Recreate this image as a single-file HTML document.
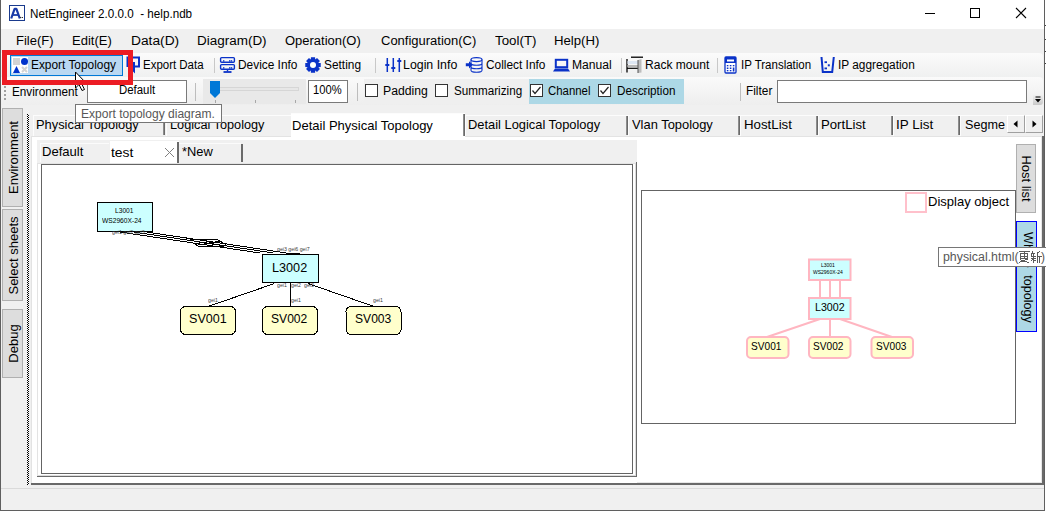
<!DOCTYPE html>
<html><head><meta charset="utf-8">
<style>
*{margin:0;padding:0;box-sizing:border-box;}
html,body{width:1046px;height:512px;overflow:hidden;background:#fff;}
body{position:relative;font-family:"Liberation Sans",sans-serif;color:#000;}
.a{position:absolute;}
.t{position:absolute;white-space:pre;line-height:1;}
</style></head><body>
<div class="a" style="left:0px;top:0px;width:1046px;height:512px;background:#fff"></div>
<div class="a" style="left:1px;top:29px;width:1043px;height:481px;background:#f0f0f0"></div>
<div class="a" style="left:0px;top:0px;width:1px;height:511px;background:#5f5f5f"></div>
<div class="a" style="left:1044px;top:0px;width:1px;height:511px;background:#5f5f5f"></div>
<div class="a" style="left:0px;top:510px;width:1045px;height:1px;background:#5f5f5f"></div>
<div class="a" style="left:1045px;top:25px;width:1px;height:1px;background:#444"></div>
<div class="a" style="left:1045px;top:39px;width:1px;height:1px;background:#444"></div>
<div class="a" style="left:1045px;top:51px;width:1px;height:1px;background:#444"></div>
<div class="a" style="left:1045px;top:63px;width:1px;height:1px;background:#444"></div>
<div class="a" style="left:9px;top:5px;width:16px;height:16px;border:1px solid #1a3a8c;background:#fff"></div>
<svg class="a" style="left:9px;top:5px;" width="16" height="16" viewBox="0 0 16 16"><path d="M2.2 13.5L5.6 3.8H7.4L10.8 13.5" fill="none" stroke="#1a3aa8" stroke-width="2.2" stroke-linejoin="bevel"/><path d="M3.5 10H9.5" stroke="#1a3aa8" stroke-width="1.8"/><path d="M11 12.5H14" stroke="#333" stroke-width="1.2" stroke-dasharray="1.3 .6"/></svg>
<div class="t" style="left:30.00px;top:8px;font-size:12.5px;color:#000;transform:scaleX(0.9331);transform-origin:0 0;">NetEngineer 2.0.0.0  - help.ndb</div>
<div class="a" style="left:925px;top:13px;width:10px;height:1px;background:#000"></div>
<div class="a" style="left:970px;top:8px;width:10px;height:10px;border:1px solid #000"></div>
<svg class="a" style="left:1015px;top:7px;" width="12" height="12" viewBox="0 0 12 12"><path d="M1 1L11 11M11 1L1 11" stroke="#000" stroke-width="1.1"/></svg>
<div class="t" style="left:16.40px;top:35px;font-size:12.5px;color:#000;transform:scaleX(1.0414);transform-origin:0 0;">File(F)</div>
<div class="t" style="left:72.20px;top:35px;font-size:12.5px;color:#000;transform:scaleX(1.0409);transform-origin:0 0;">Edit(E)</div>
<div class="t" style="left:130.60px;top:35px;font-size:12.5px;color:#000;transform:scaleX(1.1003);transform-origin:0 0;">Data(D)</div>
<div class="t" style="left:196.60px;top:35px;font-size:12.5px;color:#000;transform:scaleX(1.0776);transform-origin:0 0;">Diagram(D)</div>
<div class="t" style="left:285.00px;top:35px;font-size:12.5px;color:#000;transform:scaleX(1.0382);transform-origin:0 0;">Operation(O)</div>
<div class="t" style="left:380.80px;top:35px;font-size:12.5px;color:#000;transform:scaleX(1.0389);transform-origin:0 0;">Configuration(C)</div>
<div class="t" style="left:494.60px;top:35px;font-size:12.5px;color:#000;transform:scaleX(1.0660);transform-origin:0 0;">Tool(T)</div>
<div class="t" style="left:554.00px;top:35px;font-size:12.5px;color:#000;transform:scaleX(1.0541);transform-origin:0 0;">Help(H)</div>
<div class="a" style="left:1px;top:53px;width:1042px;height:24px;background:linear-gradient(#fbfbfb,#eff0f0);border-radius:0 4px 4px 0"></div>
<div class="a" style="left:10px;top:55px;width:113px;height:21px;background:#bad8f2;border:1px solid #0078d7"></div>
<div class="a" style="left:12px;top:57px;width:16px;height:16px;background:#fff"></div>
<div class="a" style="left:13px;top:58px;width:7px;height:7px;background:#d3d3d3"></div>
<svg class="a" style="left:21px;top:58px;" width="7" height="7" viewBox="0 0 7 7"><circle cx="3.5" cy="3.5" r="3.5" fill="#0033cc"/></svg>
<svg class="a" style="left:13px;top:66px;" width="7" height="7" viewBox="0 0 7 7"><path d="M3.5 0L7 7H0Z" fill="#0033cc"/></svg>
<svg class="a" style="left:21px;top:66px;" width="7" height="7" viewBox="0 0 7 7"><path d="M1 1L6 6M6 1L1 6" stroke="#d3d3d3" stroke-width="2"/></svg>
<div class="t" style="left:31.00px;top:58.599999999999994px;font-size:12px;color:#000;transform:scaleX(0.9900);transform-origin:0 0;">Export Topology</div>
<svg class="a" style="left:126px;top:56px;" width="16" height="18" viewBox="0 0 16 18"><path d="M1.5 11V1.5H13V10.5H9" fill="none" stroke="#0a32c8" stroke-width="2"/><path d="M8 6L8 15L6 13" fill="none" stroke="#0a32c8" stroke-width="2"/></svg>
<div class="t" style="left:143.40px;top:58.599999999999994px;font-size:12px;color:#000;transform:scaleX(0.9559);transform-origin:0 0;">Export Data</div>
<div class="a" style="left:214px;top:58px;width:1px;height:15px;background:#c8c8c8"></div>
<svg class="a" style="left:219px;top:56px;" width="17" height="18" viewBox="0 0 17 18"><rect x="1.6" y="1.6" width="13.8" height="4.6" rx="1" fill="none" stroke="#0a32c8" stroke-width="1.4"/><rect x="1.6" y="8.6" width="13.8" height="4.6" rx="1" fill="none" stroke="#0a32c8" stroke-width="1.4"/><path d="M8.5 13V15.5" stroke="#0a32c8" stroke-width="1.4"/><path d="M4.5 16H12.5" stroke="#0a32c8" stroke-width="1.8"/><g fill="#0a32c8"><rect x="4" y="4.2" width="1.4" height="1.4"/><rect x="10" y="4.2" width="1.4" height="1.4"/><rect x="11.8" y="4.2" width="1.4" height="1.4"/><rect x="4" y="11.2" width="1.4" height="1.4"/><rect x="10" y="11.2" width="1.4" height="1.4"/><rect x="11.8" y="11.2" width="1.4" height="1.4"/></g></svg>
<div class="t" style="left:237.80px;top:58.599999999999994px;font-size:12px;color:#000;transform:scaleX(0.9902);transform-origin:0 0;">Device Info</div>
<svg class="a" style="left:305px;top:57px;" width="16" height="16" viewBox="0 0 16 16"><polygon points="15.73,5.94 15.73,10.06 13.11,10.28 13.23,10.00 14.92,12.01 12.01,14.92 10.00,13.23 10.28,13.11 10.06,15.73 5.94,15.73 5.72,13.11 6.00,13.23 3.99,14.92 1.08,12.01 2.77,10.00 2.89,10.28 0.27,10.06 0.27,5.94 2.89,5.72 2.77,6.00 1.08,3.99 3.99,1.08 6.00,2.77 5.72,2.89 5.94,0.27 10.06,0.27 10.28,2.89 10.00,2.77 12.01,1.08 14.92,3.99 13.23,6.00 13.11,5.72" fill="#0a32c8"/><circle cx="8" cy="8" r="3" fill="#fff"/></svg>
<div class="t" style="left:323.50px;top:58.599999999999994px;font-size:12px;color:#000;transform:scaleX(0.9900);transform-origin:0 0;">Setting</div>
<div class="a" style="left:375px;top:58px;width:1px;height:15px;background:#c8c8c8"></div>
<svg class="a" style="left:384px;top:57px;" width="18" height="17" viewBox="0 0 18 17"><path d="M3.3 1V15M9.3 1V15M15.3 1V15" stroke="#0a32c8" stroke-width="1.5"/><path d="M1.3 8H5.3M7.3 11H11.3M13.3 4H17.3" stroke="#0a32c8" stroke-width="2"/></svg>
<div class="t" style="left:403.20px;top:58.599999999999994px;font-size:12px;color:#000;transform:scaleX(1.0302);transform-origin:0 0;">Login Info</div>
<svg class="a" style="left:465px;top:57px;" width="19" height="17" viewBox="0 0 19 17"><g fill="none" stroke="#0a32c8" stroke-width="1.1"><ellipse cx="11.5" cy="2.6" rx="5.5" ry="2"/><path d="M6 2.6V13.2M17 2.6V13.2M6 13.2A5.5 2 0 0 0 17 13.2M6 6.2A5.5 2 0 0 0 17 6.2M6 9.7A5.5 2 0 0 0 17 9.7"/></g><path d="M0.8 6.3H4V4.2L7.8 7.8L4 11.4V9.3H0.8Z" fill="#0a32c8"/></svg>
<div class="t" style="left:485.50px;top:58.599999999999994px;font-size:12px;color:#000;transform:scaleX(0.9898);transform-origin:0 0;">Collect Info</div>
<svg class="a" style="left:552px;top:57px;" width="18" height="16" viewBox="0 0 18 16"><rect x="3.8" y="2.8" width="11.4" height="7.4" fill="none" stroke="#0a32c8" stroke-width="2"/><path d="M1 14.5L3 11.5H16L18 14.5Z" fill="#0a32c8"/></svg>
<div class="t" style="left:571.80px;top:58.599999999999994px;font-size:12px;color:#000;transform:scaleX(1.0108);transform-origin:0 0;">Manual</div>
<div class="a" style="left:621px;top:58px;width:1px;height:15px;background:#c8c8c8"></div>
<svg class="a" style="left:624px;top:56px;" width="20" height="18" viewBox="0 0 20 18"><path d="M3 3V16.5" stroke="#000" stroke-width="1.3"/><path d="M7 1.2H19" stroke="#000" stroke-width="1.3"/><rect x="3.5" y="5" width="12.5" height="3" fill="#dde6f2"/><rect x="3.5" y="9" width="12.5" height="2" fill="#b8b8b8"/><path d="M3 12.3H16" stroke="#000" stroke-width="1.2"/><path d="M14 4L17.5 3V16.5L14 17Z" fill="#bdbdbd"/><path d="M14 4V17" stroke="#555" stroke-width="1"/></svg>
<div class="t" style="left:644.60px;top:58.599999999999994px;font-size:12px;color:#000;transform:scaleX(1.0039);transform-origin:0 0;">Rack mount</div>
<div class="a" style="left:717px;top:58px;width:1px;height:15px;background:#c8c8c8"></div>
<svg class="a" style="left:724px;top:56px;" width="13" height="18" viewBox="0 0 13 18"><rect x="1" y="1" width="11" height="16" rx="1" fill="#fff" stroke="#0a32c8" stroke-width="1.3"/><rect x="1" y="1" width="11" height="6" fill="#0a32c8"/><rect x="3" y="3.5" width="7" height="2" fill="#fff"/><g fill="#0a32c8"><rect x="2.8" y="9" width="1.6" height="1.3"/><rect x="5.8" y="9" width="1.6" height="1.3"/><rect x="8.8" y="9" width="1.6" height="1.3"/><rect x="2.8" y="11.5" width="1.6" height="1.5"/><rect x="5.8" y="11.5" width="1.6" height="1.5"/><rect x="8.8" y="11.5" width="1.6" height="4"/><rect x="2.8" y="14" width="1.6" height="1.3"/><rect x="5.8" y="14" width="1.6" height="1.3"/></g></svg>
<div class="t" style="left:740.50px;top:58.599999999999994px;font-size:12px;color:#000;transform:scaleX(0.9589);transform-origin:0 0;">IP Translation</div>
<svg class="a" style="left:819px;top:56px;" width="17" height="18" viewBox="0 0 17 18"><path d="M2.5 1L3.8 16H13.2L14.8 1" fill="none" stroke="#0a32c8" stroke-width="2"/><g fill="#0a32c8"><rect x="5.5" y="5.3" width="2.5" height="1.8"/><rect x="8.8" y="8.3" width="2" height="2"/><rect x="5.5" y="11.5" width="2.5" height="1.8"/></g></svg>
<div class="t" style="left:838.10px;top:58.599999999999994px;font-size:12px;color:#000;transform:scaleX(0.9859);transform-origin:0 0;">IP aggregation</div>
<div class="a" style="left:1px;top:77px;width:1042px;height:28px;background:linear-gradient(#fafafa,#eeeeee);border-radius:0 4px 4px 0"></div>
<div class="a" style="left:4px;top:86px;width:2px;height:2px;background:#a0a0a0"></div>
<div class="a" style="left:4px;top:90px;width:2px;height:2px;background:#a0a0a0"></div>
<div class="a" style="left:4px;top:94px;width:2px;height:2px;background:#a0a0a0"></div>
<div class="a" style="left:4px;top:98px;width:2px;height:2px;background:#a0a0a0"></div>
<div class="t" style="left:12.20px;top:85.5px;font-size:12px;color:#000;transform:scaleX(0.9771);transform-origin:0 0;">Environment</div>
<div class="a" style="left:87px;top:80px;width:100px;height:23px;background:#fff;border:1px solid #7a7a7a"></div>
<div class="t" style="left:119.20px;top:84px;font-size:12px;color:#000;transform:scaleX(0.9506);transform-origin:0 0;">Default</div>
<div class="a" style="left:195px;top:83px;width:1px;height:18px;background:#bdbdbd"></div>
<div class="a" style="left:203px;top:79px;width:103px;height:25px;background:#e9e9e9"></div>
<div class="a" style="left:219px;top:87px;width:80px;height:4px;background:#e7e7e7;border:1px solid #d6d6d6"></div>
<svg class="a" style="left:209px;top:80px;" width="12" height="19" viewBox="0 0 12 19"><path d="M1 1H11V13L6 18L1 13Z" fill="#0078d7"/></svg>
<div class="a" style="left:215px;top:100px;width:1px;height:3px;background:#a8a8a8"></div>
<div class="a" style="left:255px;top:100px;width:1px;height:3px;background:#a8a8a8"></div>
<div class="a" style="left:295px;top:100px;width:1px;height:3px;background:#a8a8a8"></div>
<div class="a" style="left:308px;top:80px;width:40px;height:23px;background:#fff;border:1px solid #7a7a7a"></div>
<div class="t" style="left:313.30px;top:84px;font-size:12px;color:#000;transform:scaleX(0.9327);transform-origin:0 0;">100%</div>
<div class="a" style="left:357px;top:83px;width:1px;height:18px;background:#bdbdbd"></div>
<div class="a" style="left:364px;top:79px;width:165px;height:25px;background:#efefef"></div>
<div class="a" style="left:365px;top:84px;width:13px;height:13px;background:#fff;border:1px solid #333"></div>
<div class="t" style="left:383.20px;top:85px;font-size:12px;color:#000;transform:scaleX(1.0183);transform-origin:0 0;">Padding</div>
<div class="a" style="left:435px;top:84px;width:13px;height:13px;background:#fff;border:1px solid #333"></div>
<div class="t" style="left:454.00px;top:85px;font-size:12px;color:#000;transform:scaleX(0.9729);transform-origin:0 0;">Summarizing</div>
<div class="a" style="left:529px;top:79px;width:155px;height:25px;background:#add8e6"></div>
<div class="a" style="left:530px;top:84px;width:13px;height:13px;background:#fff;border:1px solid #333"></div>
<svg class="a" style="left:530px;top:84px;" width="13" height="13" viewBox="0 0 13 13"><path d="M2.5 6.5L5 9.5L10.5 3" fill="none" stroke="#222" stroke-width="1.2"/></svg>
<div class="t" style="left:548.20px;top:85px;font-size:12px;color:#000;transform:scaleX(0.9490);transform-origin:0 0;">Channel</div>
<div class="a" style="left:598px;top:84px;width:13px;height:13px;background:#fff;border:1px solid #333"></div>
<svg class="a" style="left:598px;top:84px;" width="13" height="13" viewBox="0 0 13 13"><path d="M2.5 6.5L5 9.5L10.5 3" fill="none" stroke="#222" stroke-width="1.2"/></svg>
<div class="t" style="left:617.40px;top:85px;font-size:12px;color:#000;transform:scaleX(0.9733);transform-origin:0 0;">Description</div>
<div class="a" style="left:740px;top:83px;width:1px;height:18px;background:#bdbdbd"></div>
<div class="t" style="left:745.50px;top:85px;font-size:12px;color:#000;transform:scaleX(0.9875);transform-origin:0 0;">Filter</div>
<div class="a" style="left:777px;top:80px;width:250px;height:23px;background:#fff;border:1px solid #7a7a7a"></div>
<div class="a" style="left:1033px;top:94px;width:10px;height:11px;background:linear-gradient(#f4f4f4,#c8c8c8);border-radius:0 0 3px 0"></div>
<svg class="a" style="left:1034px;top:96px;" width="8" height="8" viewBox="0 0 8 8"><path d="M1.5 1H6.5" stroke="#000" stroke-width="1"/><path d="M1 3H7L4 6.5Z" fill="#000"/></svg>
<div class="a" style="left:2px;top:108px;width:21px;height:99px;background:#dddddd;border:1px solid #b0b0b0"></div>
<div class="t" style="left:-87.5px;top:151.0px;width:200px;height:13px;text-align:center;font-size:13px;transform:rotate(-90deg);transform-origin:50% 50%;">Environment</div>
<div class="a" style="left:2px;top:209px;width:21px;height:92px;background:#dddddd;border:1px solid #b0b0b0"></div>
<div class="t" style="left:-87.5px;top:248.5px;width:200px;height:13px;text-align:center;font-size:13px;transform:rotate(-90deg);transform-origin:50% 50%;">Select sheets</div>
<div class="a" style="left:2px;top:309px;width:21px;height:69px;background:#dddddd;border:1px solid #b0b0b0"></div>
<div class="t" style="left:-87.5px;top:337.0px;width:200px;height:13px;text-align:center;font-size:13px;transform:rotate(-90deg);transform-origin:50% 50%;">Debug</div>
<svg class="a" style="left:27px;top:114px;shape-rendering:crispEdges;" width="2" height="371" viewBox="0 0 2 371"><defs><pattern id="ck" width="2" height="2" patternUnits="userSpaceOnUse"><rect width="1" height="1" fill="#000"/><rect x="1" y="1" width="1" height="1" fill="#000"/><rect x="1" width="1" height="1" fill="#fff"/><rect y="1" width="1" height="1" fill="#fff"/></pattern></defs><rect width="2" height="371" fill="url(#ck)"/></svg>
<div class="a" style="left:31px;top:136px;width:1013px;height:349px;background:#fff"></div>
<div class="a" style="left:31px;top:136px;width:1012px;height:1px;background:#e3e3e3"></div>
<div class="a" style="left:31px;top:136px;width:1px;height:348px;background:#e3e3e3"></div>
<div class="a" style="left:1042px;top:136px;width:2px;height:349px;background:#696969"></div>
<div class="a" style="left:1041px;top:137px;width:1px;height:346px;background:#e6e6e6"></div>
<div class="a" style="left:31px;top:483px;width:1013px;height:2px;background:#696969"></div>
<div class="a" style="left:32px;top:482px;width:1009px;height:1px;background:#e6e6e6"></div>
<div class="a" style="left:33px;top:115px;width:132px;height:21px;background:#f0f0f0"></div>
<div class="a" style="left:33px;top:115px;width:132px;height:1px;background:#fcfcfc"></div>
<div class="a" style="left:33px;top:115px;width:1px;height:21px;background:#fcfcfc"></div>
<div class="a" style="left:163px;top:116px;width:1px;height:19px;background:#8c8c8c"></div>
<div class="a" style="left:164px;top:116px;width:1px;height:19px;background:#6a6a6a"></div>
<div class="t" style="left:36.40px;top:117.6px;font-size:13px;color:#000;transform:scaleX(0.9900);transform-origin:0 0;">Physical Topology</div>
<div class="a" style="left:166px;top:115px;width:127px;height:21px;background:#f0f0f0"></div>
<div class="a" style="left:166px;top:115px;width:127px;height:1px;background:#fcfcfc"></div>
<div class="a" style="left:166px;top:115px;width:1px;height:21px;background:#fcfcfc"></div>
<div class="a" style="left:291px;top:116px;width:1px;height:19px;background:#8c8c8c"></div>
<div class="a" style="left:292px;top:116px;width:1px;height:19px;background:#6a6a6a"></div>
<div class="t" style="left:170.30px;top:117.6px;font-size:13px;color:#000;transform:scaleX(0.9778);transform-origin:0 0;">Logical Topology</div>
<div class="a" style="left:465px;top:115px;width:163px;height:21px;background:#f0f0f0"></div>
<div class="a" style="left:465px;top:115px;width:163px;height:1px;background:#fcfcfc"></div>
<div class="a" style="left:465px;top:115px;width:1px;height:21px;background:#fcfcfc"></div>
<div class="a" style="left:626px;top:116px;width:1px;height:19px;background:#8c8c8c"></div>
<div class="a" style="left:627px;top:116px;width:1px;height:19px;background:#6a6a6a"></div>
<div class="t" style="left:467.50px;top:117.6px;font-size:13px;color:#000;transform:scaleX(0.9900);transform-origin:0 0;">Detail Logical Topology</div>
<div class="a" style="left:628px;top:115px;width:112px;height:21px;background:#f0f0f0"></div>
<div class="a" style="left:628px;top:115px;width:112px;height:1px;background:#fcfcfc"></div>
<div class="a" style="left:628px;top:115px;width:1px;height:21px;background:#fcfcfc"></div>
<div class="a" style="left:738px;top:116px;width:1px;height:19px;background:#8c8c8c"></div>
<div class="a" style="left:739px;top:116px;width:1px;height:19px;background:#6a6a6a"></div>
<div class="t" style="left:632.00px;top:117.6px;font-size:13px;color:#000;transform:scaleX(0.9925);transform-origin:0 0;">Vlan Topology</div>
<div class="a" style="left:740px;top:115px;width:78px;height:21px;background:#f0f0f0"></div>
<div class="a" style="left:740px;top:115px;width:78px;height:1px;background:#fcfcfc"></div>
<div class="a" style="left:740px;top:115px;width:1px;height:21px;background:#fcfcfc"></div>
<div class="a" style="left:816px;top:116px;width:1px;height:19px;background:#8c8c8c"></div>
<div class="a" style="left:817px;top:116px;width:1px;height:19px;background:#6a6a6a"></div>
<div class="t" style="left:744.10px;top:117.6px;font-size:13px;color:#000;transform:scaleX(1.0203);transform-origin:0 0;">HostList</div>
<div class="a" style="left:818px;top:115px;width:75px;height:21px;background:#f0f0f0"></div>
<div class="a" style="left:818px;top:115px;width:75px;height:1px;background:#fcfcfc"></div>
<div class="a" style="left:818px;top:115px;width:1px;height:21px;background:#fcfcfc"></div>
<div class="a" style="left:891px;top:116px;width:1px;height:19px;background:#8c8c8c"></div>
<div class="a" style="left:892px;top:116px;width:1px;height:19px;background:#6a6a6a"></div>
<div class="t" style="left:821.20px;top:117.6px;font-size:13px;color:#000;transform:scaleX(1.0131);transform-origin:0 0;">PortList</div>
<div class="a" style="left:893px;top:115px;width:67px;height:21px;background:#f0f0f0"></div>
<div class="a" style="left:893px;top:115px;width:67px;height:1px;background:#fcfcfc"></div>
<div class="a" style="left:893px;top:115px;width:1px;height:21px;background:#fcfcfc"></div>
<div class="a" style="left:958px;top:116px;width:1px;height:19px;background:#8c8c8c"></div>
<div class="a" style="left:959px;top:116px;width:1px;height:19px;background:#6a6a6a"></div>
<div class="t" style="left:895.70px;top:117.6px;font-size:13px;color:#000;transform:scaleX(1.0352);transform-origin:0 0;">IP List</div>
<div class="a" style="left:960px;top:115px;width:47px;height:21px;background:#f0f0f0"></div>
<div class="a" style="left:960px;top:115px;width:47px;height:1px;background:#fcfcfc"></div>
<div class="a" style="left:960px;top:115px;width:1px;height:21px;background:#fcfcfc"></div>
<div class="t" style="left:964.80px;top:117.6px;font-size:13px;color:#000;transform:scaleX(0.9700);transform-origin:0 0;">Segme</div>
<div class="a" style="left:291px;top:113px;width:174px;height:27px;background:#fff"></div>
<div class="a" style="left:291px;top:113px;width:172px;height:1px;background:#fcfcfc"></div>
<div class="a" style="left:463px;top:114px;width:1px;height:22px;background:#8c8c8c"></div>
<div class="a" style="left:464px;top:114px;width:1px;height:22px;background:#6a6a6a"></div>
<div class="t" style="left:291.50px;top:119px;font-size:13px;color:#000;transform:scaleX(1.0015);transform-origin:0 0;">Detail Physical Topology</div>
<div class="a" style="left:1007px;top:115px;width:18px;height:18px;background:#f0f0f0;border:1px solid #a0a0a0;border-top-color:#fff;border-left-color:#fff"></div>
<div class="a" style="left:1025px;top:115px;width:18px;height:18px;background:#f0f0f0;border:1px solid #a0a0a0;border-top-color:#fff;border-left-color:#fff"></div>
<svg class="a" style="left:1013px;top:120px;" width="6" height="8" viewBox="0 0 6 8"><path d="M4.5 0.5V7.5L0.5 4Z" fill="#000"/></svg>
<svg class="a" style="left:1031px;top:120px;" width="6" height="8" viewBox="0 0 6 8"><path d="M1.5 0.5V7.5L5.5 4Z" fill="#000"/></svg>
<div class="a" style="left:32px;top:137px;width:605px;height:346px;background:#fff"></div>
<div class="a" style="left:37px;top:140px;width:600px;height:23px;background:#f0f0f0"></div>
<div class="a" style="left:37px;top:163px;width:600px;height:314px;background:#fff"></div>
<div class="a" style="left:37px;top:163px;width:1px;height:313px;background:#e3e3e3"></div>
<div class="a" style="left:37px;top:163px;width:599px;height:1px;background:#e3e3e3"></div>
<div class="a" style="left:636px;top:162px;width:1px;height:315px;background:#6a6a6a"></div>
<div class="a" style="left:635px;top:163px;width:1px;height:313px;background:#dcdcdc"></div>
<div class="a" style="left:37px;top:476px;width:600px;height:1px;background:#6a6a6a"></div>
<div class="a" style="left:38px;top:475px;width:597px;height:1px;background:#dcdcdc"></div>
<div class="a" style="left:37px;top:140px;width:73px;height:23px;background:#f0f0f0"></div>
<div class="a" style="left:40px;top:143px;width:69px;height:1px;background:#fbfbfb"></div>
<div class="a" style="left:40px;top:143px;width:1px;height:19px;background:#fbfbfb"></div>
<div class="t" style="left:42.20px;top:145px;font-size:13px;color:#000;transform:scaleX(1.0048);transform-origin:0 0;">Default</div>
<div class="a" style="left:110px;top:141px;width:69px;height:22px;background:#fff"></div>
<div class="a" style="left:177px;top:142px;width:2px;height:21px;background:#6a6a6a"></div>
<div class="t" style="left:111.40px;top:145.5px;font-size:13px;color:#000;transform:scaleX(1.0705);transform-origin:0 0;">test</div>
<svg class="a" style="left:164px;top:147px;" width="11" height="11" viewBox="0 0 11 11"><path d="M1 1L10 10M10 1L1 10" stroke="#808080" stroke-width="1"/></svg>
<div class="a" style="left:179px;top:143px;width:64px;height:19px;background:#f0f0f0"></div>
<div class="a" style="left:179px;top:143px;width:62px;height:1px;background:#fbfbfb"></div>
<div class="a" style="left:241px;top:144px;width:2px;height:18px;background:#6a6a6a"></div>
<div class="t" style="left:181.50px;top:145.2px;font-size:13px;color:#000;transform:scaleX(0.9900);transform-origin:0 0;">*New</div>
<div class="a" style="left:41px;top:164px;width:592px;height:310px;background:#fff;border:1px solid #646464"></div>
<svg class="a" style="left:0px;top:0px;" width="1046" height="512" viewBox="0 0 1046 512"><g fill="none" stroke="#000" stroke-width="1" shape-rendering="crispEdges"><path d="M147 232.1L286 252.9"/><path d="M133 231.9L273 252.9"/><path d="M120 232.0L260 253.0"/><path d="M190 239.5H217L226 244.5"/><path d="M193 243L199 246.5H224"/><path d="M196 241.5L222 245.5"/><path d="M198 245L221 241"/><path d="M286 253.5H300"/></g><path d="M274.5 283.5L208 306.5M290.5 283V306M308 283.5L374 306.5" stroke="#000" stroke-width="1" fill="none" shape-rendering="crispEdges"/><rect x="97.5" y="202.5" width="55" height="29" fill="#ccffff" stroke="#000"/><rect x="262.5" y="254.5" width="56" height="28" fill="#ccffff" stroke="#000"/><rect x="180.5" y="306.5" width="55" height="28" rx="5" fill="#ffffcc" stroke="#000" shape-rendering="crispEdges"/><rect x="262.5" y="306.5" width="55" height="28" rx="5" fill="#ffffcc" stroke="#000" shape-rendering="crispEdges"/><rect x="346.0" y="306.5" width="55" height="28" rx="5" fill="#ffffcc" stroke="#000" shape-rendering="crispEdges"/></svg>
<div class="t" style="left:115.00px;top:207px;font-size:7px;color:#000;transform:scaleX(0.9500);transform-origin:0 0;">L3001</div>
<div class="t" style="left:102.00px;top:216.5px;font-size:7px;color:#000;transform:scaleX(0.9500);transform-origin:0 0;">WS2960X-24</div>
<div class="t" style="left:272.10px;top:261px;font-size:13px;color:#000;transform:scaleX(0.9733);transform-origin:0 0;">L3002</div>
<div class="t" style="left:188.50px;top:312px;font-size:13px;color:#000;transform:scaleX(0.9672);transform-origin:0 0;">SV001</div>
<div class="t" style="left:271.00px;top:312px;font-size:13px;color:#000;transform:scaleX(0.9300);transform-origin:0 0;">SV002</div>
<div class="t" style="left:354.50px;top:312px;font-size:13px;color:#000;transform:scaleX(0.9300);transform-origin:0 0;">SV003</div>
<div class="t" style="left:112.00px;top:230px;font-size:5.5px;color:#3a3a3a;transform:scaleX(0.9500);transform-origin:0 0;">gei1 gei2 gei3</div>
<div class="t" style="left:277.00px;top:247px;font-size:5.5px;color:#3a3a3a;transform:scaleX(0.9500);transform-origin:0 0;">gei3 gei6 gei7</div>
<div class="t" style="left:277.00px;top:282.5px;font-size:5.5px;color:#3a3a3a;transform:scaleX(0.9500);transform-origin:0 0;">gei1</div>
<div class="t" style="left:291.00px;top:282.5px;font-size:5.5px;color:#3a3a3a;transform:scaleX(0.9500);transform-origin:0 0;">gei2</div>
<div class="t" style="left:304.00px;top:282.5px;font-size:5.5px;color:#3a3a3a;transform:scaleX(0.9500);transform-origin:0 0;">gei3</div>
<div class="t" style="left:208.00px;top:297.5px;font-size:5.5px;color:#3a3a3a;transform:scaleX(0.9500);transform-origin:0 0;">gei1</div>
<div class="t" style="left:291.00px;top:297.5px;font-size:5.5px;color:#3a3a3a;transform:scaleX(0.9500);transform-origin:0 0;">gei1</div>
<div class="t" style="left:373.00px;top:297.5px;font-size:5.5px;color:#3a3a3a;transform:scaleX(0.9500);transform-origin:0 0;">gei1</div>
<div class="a" style="left:641px;top:190px;width:375px;height:234px;background:#fff;border:1px solid #646464"></div>
<div class="a" style="left:905px;top:192px;width:22px;height:21px;border:2px solid #ffc0cb"></div>
<div class="t" style="left:927.60px;top:195px;font-size:13px;color:#000;transform:scaleX(1.0011);transform-origin:0 0;">Display object</div>
<svg class="a" style="left:0px;top:0px;" width="1046" height="512" viewBox="0 0 1046 512"><g stroke="#ffb6c1" stroke-width="2" fill="none"><path d="M820 280V298M830 280V298M840 280V298M820 319L767 337M830 319V337M840 319L892 337"/></g><rect x="809" y="259.5" width="41.5" height="20.5" fill="#ccffff" stroke="#ffb6c1" stroke-width="2"/><rect x="809" y="298" width="41.5" height="21" fill="#ccffff" stroke="#ffb6c1" stroke-width="2"/><rect x="747" y="337" width="41.5" height="21" rx="4" fill="#ffffcc" stroke="#ffb6c1" stroke-width="2"/><rect x="809" y="337" width="41.5" height="21" rx="4" fill="#ffffcc" stroke="#ffb6c1" stroke-width="2"/><rect x="871.5" y="337" width="41.5" height="21" rx="4" fill="#ffffcc" stroke="#ffb6c1" stroke-width="2"/></svg>
<div class="t" style="left:821.00px;top:263px;font-size:5px;color:#000;">L3001</div>
<div class="t" style="left:813.00px;top:270px;font-size:5px;color:#000;">WS2960X-24</div>
<div class="t" style="left:814.50px;top:301.5px;font-size:11px;color:#000;transform:scaleX(0.9700);transform-origin:0 0;">L3002</div>
<div class="t" style="left:751.00px;top:340.5px;font-size:11px;color:#000;transform:scaleX(0.9200);transform-origin:0 0;">SV001</div>
<div class="t" style="left:813.00px;top:340.5px;font-size:11px;color:#000;transform:scaleX(0.9200);transform-origin:0 0;">SV002</div>
<div class="t" style="left:875.50px;top:340.5px;font-size:11px;color:#000;transform:scaleX(0.9200);transform-origin:0 0;">SV003</div>
<div class="a" style="left:1016px;top:144px;width:20px;height:69px;background:#dddddd;border:1px solid #b0b0b0"></div>
<div class="t" style="left:926.0px;top:172.0px;width:200px;height:13px;text-align:center;font-size:13px;transform:rotate(90deg);transform-origin:50% 50%;">Host list</div>
<div class="a" style="left:1016px;top:221px;width:21px;height:111px;background:#add8e6;border:1px solid #0000ff"></div>
<div class="t" style="left:976.5px;top:271px;width:100px;height:13px;text-align:center;font-size:12.6px;word-spacing:4px;transform:rotate(90deg);transform-origin:50% 50%;">Whole topology</div>
<div class="a" style="left:75px;top:104px;width:147px;height:19px;background:#fff;border:1px solid #767676"></div>
<div class="t" style="left:81.00px;top:107.6px;font-size:12px;color:#575757;transform:scaleX(1.0037);transform-origin:0 0;">Export topology diagram.</div>
<div class="a" style="left:938px;top:247px;width:110px;height:20px;background:#fff;border:1px solid #767676"></div>
<div class="t" style="left:943.40px;top:251.3px;font-size:12px;color:#575757;transform:scaleX(1.0300);transform-origin:0 0;">physical.html(</div>
<svg class="a" style="left:1018px;top:251px;" width="24" height="12" viewBox="0 0 24 12"><g fill="none" stroke="#5a5a5a" stroke-width="1" shape-rendering="crispEdges"><path d="M0.5 0.5H11.5M2.5 2.5H9.5V7.5H2.5ZM2.5 5H9.5M6 0.5V7.5M2 8.5Q6 11 11.5 11.5M9.5 8L1 11.5"/><path d="M14.5 0V1.5M12.5 2H17M13.5 3L14 5M16 3L15.5 5M12.5 5.5H17.5M12.5 7.5H17.5M15 5.5V11.5M15 8L12.5 10.5M15 8L17.5 10M22.5 0.5L19 2V11.5M19 5.5H23.5M21.5 5.5V11.5"/></g></svg>
<div class="t" style="left:1041.00px;top:251.3px;font-size:12px;color:#575757;">)</div>
<svg class="a" style="left:74px;top:71px;" width="13" height="21" viewBox="0 0 13 21"><path d="M1.5 1V17L5 13.5L8 19.5L10.5 18.5L7.5 12.5H12.5Z" fill="#fff" stroke="#000" stroke-width="1"/></svg>
<div class="a" style="left:2px;top:50px;width:131px;height:35px;border:5px solid #ec1c24"></div>
<div class="a" style="left:1px;top:488px;width:1043px;height:1px;background:#dadada"></div>
</body></html>
